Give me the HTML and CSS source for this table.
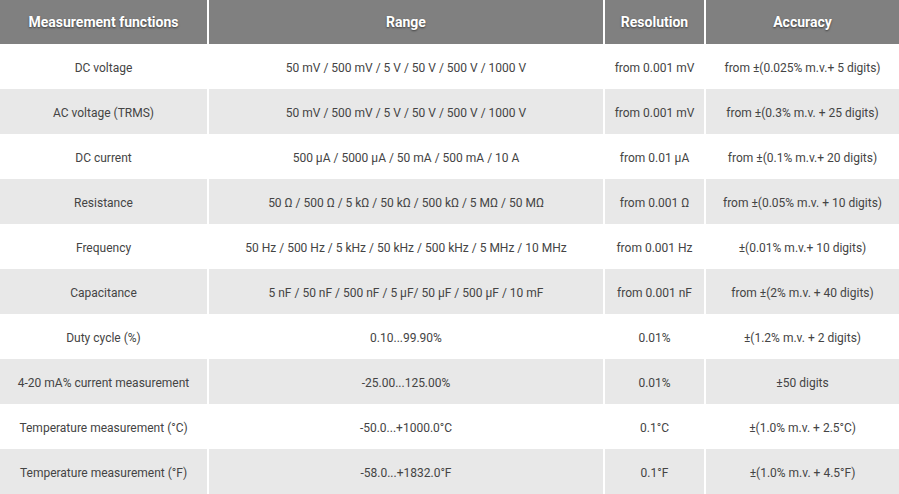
FILE: index.html
```html
<!DOCTYPE html>
<html>
<head>
<meta charset="utf-8">
<link rel="stylesheet" href="styles.css">
</head>
<body>
<table class="spec">
  <colgroup>
    <col class="c1"><col class="c2"><col class="c3"><col class="c4">
  </colgroup>
  <thead>
    <tr><th>Measurement functions</th><th>Range</th><th>Resolution</th><th>Accuracy</th></tr>
  </thead>
  <tbody>
    <tr><td>DC voltage</td><td>50 mV / 500 mV / 5 V / 50 V / 500 V / 1000 V</td><td>from 0.001 mV</td><td>from ±(0.025% m.v.+ 5 digits)</td></tr>
    <tr><td>AC voltage (TRMS)</td><td>50 mV / 500 mV / 5 V / 50 V / 500 V / 1000 V</td><td>from 0.001 mV</td><td>from ±(0.3% m.v. + 25 digits)</td></tr>
    <tr><td>DC current</td><td>500 µA / 5000 µA / 50 mA / 500 mA / 10 A</td><td>from 0.01 µA</td><td>from ±(0.1% m.v.+ 20 digits)</td></tr>
    <tr><td>Resistance</td><td>50 Ω / 500 Ω / 5 kΩ / 50 kΩ / 500 kΩ / 5 MΩ / 50 MΩ</td><td>from 0.001 Ω</td><td>from ±(0.05% m.v. + 10 digits)</td></tr>
    <tr><td>Frequency</td><td>50 Hz / 500 Hz / 5 kHz / 50 kHz / 500 kHz / 5 MHz / 10 MHz</td><td>from 0.001 Hz</td><td>±(0.01% m.v.+ 10 digits)</td></tr>
    <tr><td>Capacitance</td><td>5 nF / 50 nF / 500 nF / 5 µF/ 50 µF / 500 µF / 10 mF</td><td>from 0.001 nF</td><td>from ±(2% m.v. + 40 digits)</td></tr>
    <tr><td>Duty cycle (%)</td><td>0.10...99.90%</td><td>0.01%</td><td>±(1.2% m.v. + 2 digits)</td></tr>
    <tr><td>4-20 mA% current measurement</td><td>-25.00...125.00%</td><td>0.01%</td><td>±50 digits</td></tr>
    <tr><td>Temperature measurement (°C)</td><td>-50.0...+1000.0°C</td><td>0.1°C</td><td>±(1.0% m.v. + 2.5°C)</td></tr>
    <tr><td>Temperature measurement (°F)</td><td>-58.0...+1832.0°F</td><td>0.1°F</td><td>±(1.0% m.v. + 4.5°F)</td></tr>
  </tbody>
</table>
</body>
</html>
```
FILE: styles.css
```css
html, body {
  margin: 0;
  padding: 0;
  background: #fff;
}
.spec {
  width: 899px;
  border-collapse: collapse;
  table-layout: fixed;
  font-family: Roboto, "Liberation Sans", sans-serif;
  font-size: 12px;
  color: #444;
}
.c1 { width: 208px; }
.c2 { width: 396px; }
.c3 { width: 101px; }
.c4 { width: 194px; }
.spec th,
.spec td {
  padding: 0 2px;
  text-align: center;
  vertical-align: middle;
  border-left: 2px solid #fff;
  white-space: nowrap;
}
.spec th:first-child,
.spec td:first-child {
  border-left: 0;
}
.spec th {
  height: 43px;
  padding-bottom: 1px;
  background: #808080;
  color: #fff;
  font-weight: 700;
  font-size: 14px;
  text-shadow: 0 1px 2px rgba(0,0,0,0.55);
}
.spec td {
  height: 43px;
  padding-top: 2px;
  background: #fff;
}
.spec tbody tr:nth-child(even) td {
  background: #e8e8e8;
}
```
